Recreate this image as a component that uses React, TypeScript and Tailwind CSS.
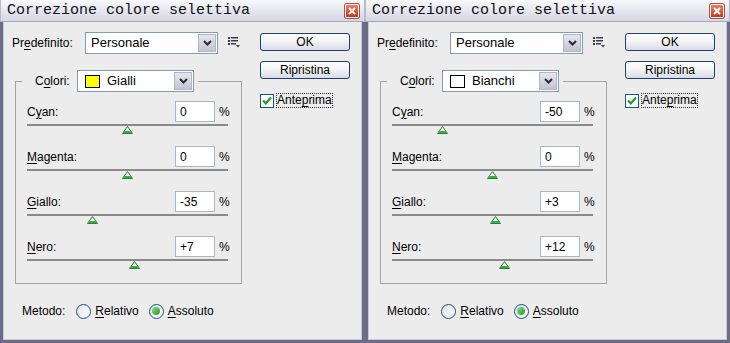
import React from "react";

const SANS = "font-['Liberation_Sans',Arial,sans-serif]";

function L({ a = "", u, b = "" }: { a?: string; u: string; b?: string }) {
  return (
    <span>
      {a}
      <span className="underline underline-offset-[2px]">{u}</span>
      {b}
    </span>
  );
}

function Chevron() {
  return (
    <svg width="9" height="6" viewBox="0 0 9 6">
      <path d="M1 1 L4.5 4.5 L8 1" fill="none" stroke="#2a2a3a" strokeWidth="2" />
    </svg>
  );
}

function DropBtn() {
  return (
    <div className="w-[18px] h-[18px] my-auto mr-[1px] flex items-center justify-center bg-gradient-to-b from-[#e6e6ee] to-[#c4c4d0] border border-[#b4b4c4]">
      <Chevron />
    </div>
  );
}

function MenuIcon() {
  return (
    <svg width="13" height="11" viewBox="0 0 13 11">
      <rect x="0" y="0" width="2" height="2" fill="#3a3a4a" />
      <rect x="3" y="0" width="7" height="1.5" fill="#3a3a4a" />
      <rect x="0" y="3" width="2" height="2" fill="#3a3a4a" />
      <rect x="3" y="3" width="7" height="1.5" fill="#3a3a4a" />
      <rect x="0" y="6" width="2" height="2" fill="#3a3a4a" />
      <rect x="3" y="6" width="5" height="1.5" fill="#3a3a4a" />
      <path d="M8 8 L12 8 L10 10.5 Z" fill="#3a3a4a" />
    </svg>
  );
}

function Thumb({ value }: { value: number }) {
  const center = 100.5 + value * 1.005;
  return (
    <div className="absolute top-[2px]" style={{ left: `${center - 5.5}px` }}>
      <svg width="11" height="8" viewBox="0 0 11 8">
        <path d="M5.5 0.5 L10.5 7.5 L0.5 7.5 Z" fill="#f4fff4" stroke="#2f7a34" strokeWidth="1" />
        <rect x="1.5" y="5" width="8" height="2" fill="#38b040" />
      </svg>
    </div>
  );
}

function SliderRow({ label, value, text }: { label: React.ReactNode; value: number; text: string }) {
  return (
    <div className="h-[45px] flex flex-col">
      <div className="h-[21px] flex items-center justify-between">
        <span>{label}</span>
        <div className="flex items-center">
          <div className="w-[40px] h-[21px] bg-white border border-[#a9b8c8] flex items-center pl-[4px]">
            {text}
          </div>
          <span className="ml-[4px] w-[11px]">%</span>
        </div>
      </div>
      <div className="relative mt-[2px] h-[2px] w-[201px] bg-[#8a8a8a]">
        <Thumb value={value} />
      </div>
    </div>
  );
}

function Button({ children }: { children: React.ReactNode }) {
  return (
    <div className="w-[90px] h-[18px] rounded-[3px] border border-[#1e3f6e] bg-gradient-to-b from-[#ffffff] via-[#f2f2f4] to-[#d8dae6] flex items-center justify-center">
      {children}
    </div>
  );
}

function Radio({ checked }: { checked?: boolean }) {
  return (
    <div className="w-[15px] h-[15px] rounded-full border border-[#1f4f82] bg-gradient-to-br from-[#e4e4e8] to-[#ffffff] flex items-center justify-center">
      {checked && <div className="w-[8px] h-[8px] rounded-full bg-gradient-to-br from-[#7fe07f] to-[#1e9a2a]" />}
    </div>
  );
}

function Window({
  swatch,
  colorName,
  values,
}: {
  swatch: string;
  colorName: string;
  values: { v: number; t: string }[];
}) {
  return (
    <div className={`w-[365px] h-[343px] flex flex-col bg-[#ececec] text-[12px] text-black ${SANS}`}>
      <div className="h-[22px] flex items-center justify-between bg-gradient-to-b from-[#f8f8fc] to-[#d6d6e4] border-b border-[#a8a8bc] border-x border-x-[#b8b8c8]">
        <span className="pl-[6px] font-['Liberation_Mono','Courier_New',monospace] text-[15px] leading-none text-[#111]">
          Correzione colore selettiva
        </span>
        <div className="mr-[5px] w-[14px] h-[14px] rounded-[2px] border border-white bg-gradient-to-b from-[#f07a5a] to-[#c8321c] flex items-center justify-center shadow-[0_0_0_1px_#b05040]">
          <svg width="8" height="8" viewBox="0 0 8 8">
            <path d="M1 1 L7 7 M7 1 L1 7" stroke="white" strokeWidth="2" />
          </svg>
        </div>
      </div>
      <div className="flex-1 flex flex-col border-x-[3px] border-b-[3px] border-[#6c6c88] shadow-[inset_1px_0_0_#c8c8d8,inset_-1px_0_0_#c8c8d8,inset_0_-1px_0_#c8c8d8]">
        <div className="flex">
          <div className="w-[257px] pl-[9px] pt-[10px] flex flex-col">
            <div className="h-[22px] flex items-center">
              <span className="w-[73px]">
                <L a="Pr" u="e" b="definito:" />
              </span>
              <div className="w-[133px] h-[22px] bg-white border border-[#7f9db9] flex items-stretch justify-between">
                <span className="pl-[5px] self-center text-[13px]">Personale</span>
                <DropBtn />
              </div>
              <div className="ml-[10px] mt-[-2px]">
                <MenuIcon />
              </div>
            </div>
            <fieldset className="ml-[3px] mt-[16px] w-[227px] border border-[#a4a4a4] px-[11px] pb-[2px]">
              <legend className="-ml-[5px] pl-[13px] pr-[4px]">
                <div className="flex items-center h-[22px]">
                  <span className="w-[42px]">
                    <L a="C" u="o" b="lori:" />
                  </span>
                  <div className="w-[117px] h-[22px] bg-white border border-[#7f9db9] flex items-stretch justify-between">
                    <div className="flex items-center">
                      <div
                        className="ml-[7px] w-[15px] h-[13px] border border-black"
                        style={{ backgroundColor: swatch }}
                      />
                      <span className="ml-[7px] text-[13px]">{colorName}</span>
                    </div>
                    <DropBtn />
                  </div>
                </div>
              </legend>
              <div className="pt-[9px] flex flex-col">
                <SliderRow label={<L a="C" u="y" b="an:" />} value={values[0].v} text={values[0].t} />
                <SliderRow label={<L u="M" b="agenta:" />} value={values[1].v} text={values[1].t} />
                <SliderRow label={<L u="G" b="iallo:" />} value={values[2].v} text={values[2].t} />
                <SliderRow label={<L u="N" b="ero:" />} value={values[3].v} text={values[3].t} />
              </div>
            </fieldset>
          </div>
          <div className="pt-[11px] flex flex-col">
            <Button>OK</Button>
            <div className="mt-[10px]">
              <Button>Ripristina</Button>
            </div>
            <div className="mt-[14px] flex items-center">
              <div className="w-[14px] h-[14px] bg-white border border-[#1c5180] flex items-center justify-center">
                <svg width="10" height="9" viewBox="0 0 10 9">
                  <path d="M1 4.5 L3.8 7.3 L9 1.5" fill="none" stroke="#21a121" strokeWidth="2.2" />
                </svg>
              </div>
              <span className="ml-[2px] px-[1px] outline outline-1 outline-dotted outline-[#333] -outline-offset-1 leading-[15px]">
                <L a="Ante" u="p" b="rima" />
              </span>
            </div>
          </div>
        </div>
        <div className="mt-[19px] h-[16px] pl-[19px] flex items-center">
          <span>Metodo:</span>
          <div className="ml-[11px]">
            <Radio />
          </div>
          <span className="ml-[4px]">
            <L u="R" b="elativo" />
          </span>
          <div className="ml-[10px]">
            <Radio checked />
          </div>
          <span className="ml-[4px]">
            <L u="A" b="ssoluto" />
          </span>
        </div>
      </div>
    </div>
  );
}

export default function App() {
  return (
    <div className="w-[730px] h-[343px] flex bg-[#d8d8e0] overflow-hidden">
      <Window
        swatch="#ffff00"
        colorName="Gialli"
        values={[
          { v: 0, t: "0" },
          { v: 0, t: "0" },
          { v: -35, t: "-35" },
          { v: 7, t: "+7" },
        ]}
      />
      <Window
        swatch="#ffffff"
        colorName="Bianchi"
        values={[
          { v: -50, t: "-50" },
          { v: 0, t: "0" },
          { v: 3, t: "+3" },
          { v: 12, t: "+12" },
        ]}
      />
    </div>
  );
}
